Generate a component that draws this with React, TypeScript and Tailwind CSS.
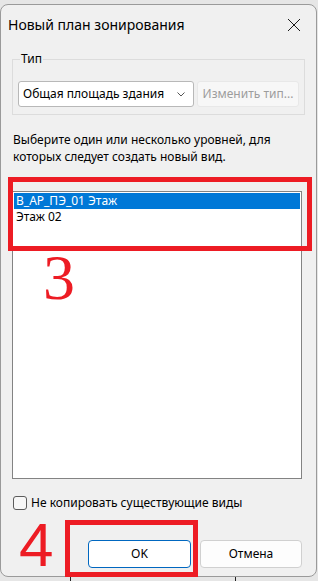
export default function App() {
    return (
        <div className="relative w-[318px] h-[581px] overflow-hidden bg-[#e6e6e6] font-['Noto_Sans',sans-serif] text-[12px] leading-[16px] text-black">
            {/* Dialog window */}
            <div className="mt-[4px] flex h-[573px] w-[317px] flex-col rounded-[8px] border border-[#9a9a9a] bg-[#f0f0f0]">
                {/* Title bar */}
                <div className="flex h-[40px] shrink-0 items-center justify-between pl-[7px] pr-[14px]">
                    <span className="text-[14px] leading-[20px]">Новый план зонирования</span>
                    <svg width="14" height="14" viewBox="0 0 14 14" className="mr-[1px]">
                        <path d="M1 1 L13 13 M13 1 L1 13" stroke="#1a1a1a" strokeWidth="1" fill="none" />
                    </svg>
                </div>

                <div className="flex flex-1 flex-col pl-[10px] pr-[14px]">
                    {/* Type group */}
                    <fieldset className="mt-[6px] ml-[1px] border border-[#dcdcdc] px-[5px] pb-[7px] pt-[14px]">
                        <legend className="ml-[2px] px-[1px]">Тип</legend>
                        <div className="flex gap-[3px]">
                            <div className="flex h-[26px] w-[176px] items-center justify-between rounded-[3px] border border-[#b8b8b8] bg-white pl-[4px] pr-[8px]">
                                <span>Общая площадь здания</span>
                                <svg width="8" height="5" viewBox="0 0 8 5">
                                    <path d="M0.5 0.5 L4 4 L7.5 0.5" stroke="#555" strokeWidth="1" fill="none" />
                                </svg>
                            </div>
                            <div className="flex h-[26px] w-[102px] items-center justify-center rounded-[3px] border border-[#e8e8e8] bg-[#f7f7f7] text-[#9d9d9d]">
                                Изменить тип...
                            </div>
                        </div>
                    </fieldset>

                    <p className="mt-[16px] ml-[2px] leading-[17px]">
                        Выберите один или несколько уровней, для
                        <br />
                        которых следует создать новый вид.
                    </p>

                    {/* Levels list */}
                    <div className="mt-[26px] ml-[1px] h-[288px] border border-[#838383] bg-white p-[1px]">
                        <div className="h-[16px] bg-[#0078d7] pl-[2px] text-white">В_АР_ПЭ_01 Этаж</div>
                        <div className="h-[16px] pl-[2px]">Этаж 02</div>
                    </div>

                    <label className="mt-[16px] ml-[2px] flex items-center gap-[4px]">
                        <span className="h-[14px] w-[14px] rounded-[3px] border border-[#5c5c5c] bg-[#f7f7f7]" />
                        <span>Не копировать существующие виды</span>
                    </label>

                    <div className="mt-[29px] flex justify-end gap-[9px]">
                        <button className="h-[28px] w-[103px] rounded-[4px] border border-[#0067c0] bg-white">OK</button>
                        <button className="h-[28px] w-[102px] rounded-[4px] border border-[#d0d0d0] bg-[#fdfdfd]">Отмена</button>
                    </div>
                </div>
            </div>

            {/* Underlying window edges */}
            <div className="absolute left-[70px] top-[577px] h-[4px] w-[1px] bg-[#222]" />
            <div className="absolute left-[235px] top-[577px] h-[4px] w-[1px] bg-[#222]" />

            {/* Red annotations */}
            <div className="absolute left-[8px] top-[177px] h-[74px] w-[304px] border-[5px] border-[#ed1c24]" />
            <span className="absolute left-[43px] top-[238px] font-['Liberation_Serif',serif] text-[64px] leading-[80px] text-[#ed1c24]">3</span>
            <div className="absolute left-[65px] top-[520px] h-[57px] w-[133px] border-[5px] border-[#ed1c24]" />
            <span className="absolute left-[19px] top-[505px] font-['Liberation_Sans',sans-serif] text-[62px] leading-[80px] text-[#ed1c24]">4</span>
        </div>
    )
}
